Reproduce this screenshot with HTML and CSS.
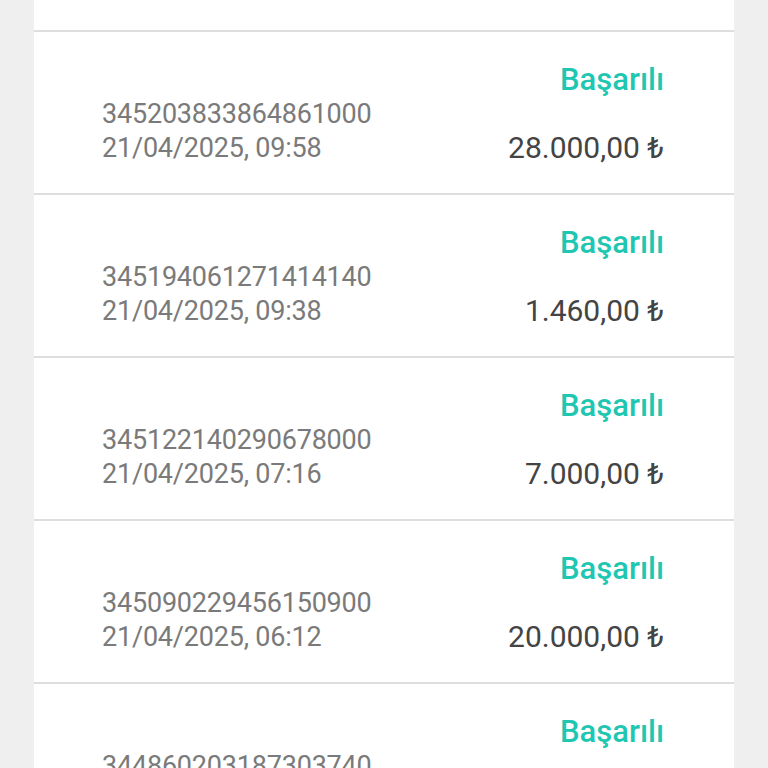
FILE: index.html
```html
<!DOCTYPE html>
<html lang="tr">
  <head>
    <meta charset="UTF-8" />
    <meta name="viewport" content="width=device-width, initial-scale=1.0" />
    <title>İşlemler</title>
    <link rel="stylesheet" href="styles.css">
  </head>
  <body>
    <div class="tx-list">
      <div class="tx-row">
        <div class="tx-info">
          <div class="tx-id">345236120984417000</div>
          <div class="tx-date">21/04/2025, 10:24</div>
        </div>
        <div class="tx-side">
          <div class="tx-status">Başarılı</div>
          <div class="tx-amount">5.000,00 ₺</div>
        </div>
      </div>
      <div class="tx-row">
        <div class="tx-info">
          <div class="tx-id">345203833864861000</div>
          <div class="tx-date">21/04/2025, 09:58</div>
        </div>
        <div class="tx-side">
          <div class="tx-status">Başarılı</div>
          <div class="tx-amount">28.000,00 ₺</div>
        </div>
      </div>
      <div class="tx-row">
        <div class="tx-info">
          <div class="tx-id">345194061271414140</div>
          <div class="tx-date">21/04/2025, 09:38</div>
        </div>
        <div class="tx-side">
          <div class="tx-status">Başarılı</div>
          <div class="tx-amount">1.460,00 ₺</div>
        </div>
      </div>
      <div class="tx-row">
        <div class="tx-info">
          <div class="tx-id">345122140290678000</div>
          <div class="tx-date">21/04/2025, 07:16</div>
        </div>
        <div class="tx-side">
          <div class="tx-status">Başarılı</div>
          <div class="tx-amount">7.000,00 ₺</div>
        </div>
      </div>
      <div class="tx-row">
        <div class="tx-info">
          <div class="tx-id">345090229456150900</div>
          <div class="tx-date">21/04/2025, 06:12</div>
        </div>
        <div class="tx-side">
          <div class="tx-status">Başarılı</div>
          <div class="tx-amount">20.000,00 ₺</div>
        </div>
      </div>
      <div class="tx-row">
        <div class="tx-info">
          <div class="tx-id">344860203187303740</div>
          <div class="tx-date">20/04/2025, 23:41</div>
        </div>
        <div class="tx-side">
          <div class="tx-status">Başarılı</div>
          <div class="tx-amount">3.500,00 ₺</div>
        </div>
      </div>
    </div>
  </body>
</html>
```

FILE: styles.css
```css
body {
  margin: 0;
  background-color: #efefef;
  font-family: Roboto, "Liberation Sans", sans-serif;
  overflow: hidden;
}
.tx-list {
  margin: -131px 34px 0 34px;
  background-color: #fff;
}
.tx-row {
  display: flex;
  justify-content: space-between;
  align-items: flex-end;
  height: 163px;
  box-sizing: border-box;
  padding: 0 70px 0 68px;
  border-bottom: 2px solid #dedede;
}
.tx-info {
  padding-bottom: 28px;
}
.tx-id,
.tx-date {
  font-size: 27px;
  line-height: 34px;
  color: #7a7a7a;
  letter-spacing: -0.2px;
}
.tx-side {
  display: flex;
  flex-direction: column;
  align-items: flex-end;
  padding-bottom: 27px;
}
.tx-status {
  font-size: 31px;
  font-weight: 500;
  color: #1fc7b2;
  line-height: 36px;
  margin-bottom: 32px;
}
.tx-amount {
  font-size: 30px;
  color: #444;
  line-height: 36px;
}
```
